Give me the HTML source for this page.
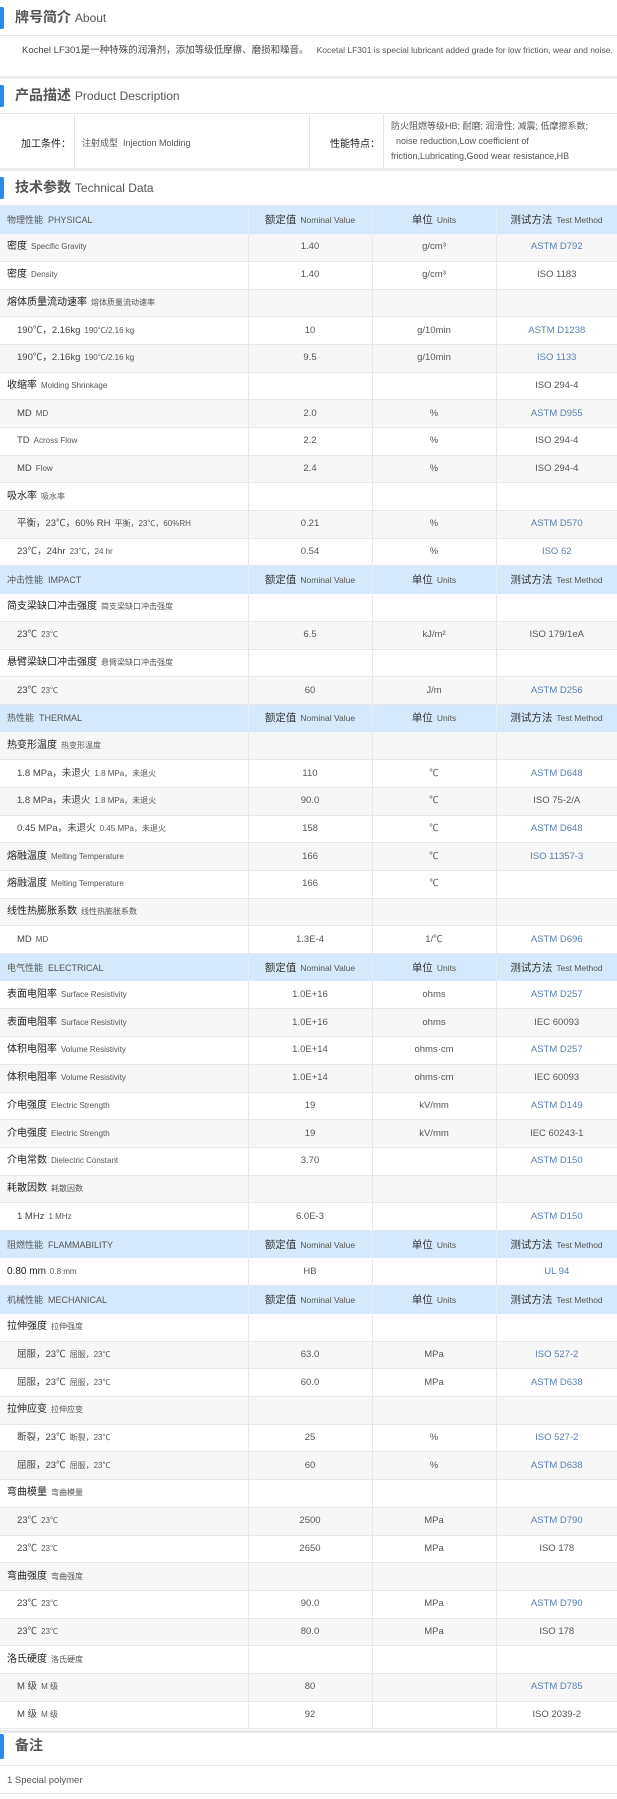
<!DOCTYPE html>
<html><head><meta charset="utf-8">
<style>
*{margin:0;padding:0;box-sizing:border-box}
body{width:617px;height:1799px;background:#fff;font-family:"Liberation Sans","Noto Sans CJK SC",sans-serif;color:#333;overflow:hidden;position:relative}
.abs{position:absolute;left:0;width:617px}
.hd{height:36px;border-bottom:1px solid #e6e6e6}
.hd .bar{position:absolute;left:0;top:7px;width:4px;height:22px;background:#2b8ae6;border-radius:0 2px 2px 0}
.hd .t{position:absolute;left:15px;top:9px;font-size:14px;line-height:17px;color:#555;font-weight:bold;white-space:nowrap}
.hd .t span{font-weight:normal;font-size:12px;color:#555}
.band{height:3px;background:#e9ebef}
.about{font-size:9.5px;line-height:12px;color:#444;padding-left:22px;white-space:nowrap}
.about span{font-size:8.5px;color:#555;margin-left:8px}
.pd div{position:absolute;top:0;height:54px;border-right:1px solid #e6e6e6;font-size:9px;color:#555}
table{border-collapse:collapse;width:617px;table-layout:fixed}
tr{height:27.7px}
td{border-right:1px solid #e8e8e8;border-bottom:1px solid #e8e8e8;font-size:9.5px;line-height:12px;color:#555;text-align:center;white-space:nowrap;padding:0;overflow:hidden}
td:last-child{border-right:0}
td:first-child{text-align:left;padding-left:7px}
tr.g td{background:#f7f7f7}
tr.h td{background:#d6e9fc;border-bottom:0;border-right:1px solid #e6eef8;color:#333;font-size:10.5px}
tr.h td small{font-size:8.5px;color:#555;margin-left:4px}
tr.h td:first-child{font-size:9px;color:#555}
td.s{padding-left:17px!important}
td b{font-weight:normal;color:#222;font-size:10px}
td i{font-style:normal;font-size:8px;color:#555;margin-left:4px}
td.s b{font-size:9.5px;color:#444}
.bl{color:#5a7fae}
</style></head><body>
<div class="abs" style="top:0"><div class="hd"><div class="bar"></div><div class="t">牌号简介 <span>About</span></div></div></div>
<div class="abs about" style="top:44px">Kochel LF301是一种特殊的润滑剂，添加等级低摩擦、磨损和噪音。<span>Kocetal LF301 is special lubricant added grade for low friction, wear and noise.</span></div>
<div class="abs band" style="top:76px"></div>
<div class="abs" style="top:78px"><div class="hd"><div class="bar"></div><div class="t">产品描述 <span>Product Description</span></div></div></div>
<div class="abs pd" style="top:114px;height:54px">
<div style="left:0;width:75px;padding:21px 0 0 21px;color:#222;font-size:10px">加工条件：</div>
<div style="left:75px;width:235px;padding:22px 0 0 7px">注射成型 &nbsp;Injection Molding</div>
<div style="left:310px;width:74px;padding:21px 0 0 20px;color:#222;font-size:10px">性能特点：</div>
<div style="left:384px;width:233px;border-right:0;padding:5px 0 0 7px;line-height:15px;color:#555">防火阻燃等级HB; 耐磨; 润滑性; 减震; 低摩擦系数;<br>&nbsp; noise reduction,Low coefficient of<br>friction,Lubricating,Good wear resistance,HB</div>
</div>
<div class="abs band" style="top:168px"></div>
<div class="abs" style="top:170px"><div class="hd"><div class="bar"></div><div class="t">技术参数 <span>Technical Data</span></div></div></div>
<div class="abs" style="top:206px">
<table>
<colgroup><col style="width:248px"><col style="width:124px"><col style="width:124px"><col style="width:121px"></colgroup>
<tr class="h"><td>物理性能 &nbsp;PHYSICAL</td><td>额定值<small>Nominal Value</small></td><td>单位<small>Units</small></td><td>测试方法<small>Test Method</small></td></tr>
<tr class="g"><td><b>密度</b><i>Specific Gravity</i></td><td>1.40</td><td>g/cm³</td><td class="bl">ASTM D792</td></tr>
<tr><td><b>密度</b><i>Density</i></td><td>1.40</td><td>g/cm³</td><td>ISO 1183</td></tr>
<tr class="g"><td><b>熔体质量流动速率</b><i>熔体质量流动速率</i></td><td></td><td></td><td></td></tr>
<tr><td class="s"><b>190℃，2.16kg</b><i>190℃/2.16 kg</i></td><td>10</td><td>g/10min</td><td class="bl">ASTM D1238</td></tr>
<tr class="g"><td class="s"><b>190℃，2.16kg</b><i>190℃/2.16 kg</i></td><td>9.5</td><td>g/10min</td><td class="bl">ISO 1133</td></tr>
<tr><td><b>收缩率</b><i>Molding Shrinkage</i></td><td></td><td></td><td>ISO 294-4</td></tr>
<tr class="g"><td class="s"><b>MD</b><i>MD</i></td><td>2.0</td><td>%</td><td class="bl">ASTM D955</td></tr>
<tr><td class="s"><b>TD</b><i>Across Flow</i></td><td>2.2</td><td>%</td><td>ISO 294-4</td></tr>
<tr class="g"><td class="s"><b>MD</b><i>Flow</i></td><td>2.4</td><td>%</td><td>ISO 294-4</td></tr>
<tr><td><b>吸水率</b><i>吸水率</i></td><td></td><td></td><td></td></tr>
<tr class="g"><td class="s"><b>平衡，23℃，60% RH</b><i>平衡，23℃，60%RH</i></td><td>0.21</td><td>%</td><td class="bl">ASTM D570</td></tr>
<tr><td class="s"><b>23℃，24hr</b><i>23℃，24 hr</i></td><td>0.54</td><td>%</td><td class="bl">ISO 62</td></tr>
<tr class="h"><td>冲击性能 &nbsp;IMPACT</td><td>额定值<small>Nominal Value</small></td><td>单位<small>Units</small></td><td>测试方法<small>Test Method</small></td></tr>
<tr><td><b>简支梁缺口冲击强度</b><i>简支梁缺口冲击强度</i></td><td></td><td></td><td></td></tr>
<tr class="g"><td class="s"><b>23℃</b><i>23℃</i></td><td>6.5</td><td>kJ/m²</td><td>ISO 179/1eA</td></tr>
<tr><td><b>悬臂梁缺口冲击强度</b><i>悬臂梁缺口冲击强度</i></td><td></td><td></td><td></td></tr>
<tr class="g"><td class="s"><b>23℃</b><i>23℃</i></td><td>60</td><td>J/m</td><td class="bl">ASTM D256</td></tr>
<tr class="h"><td>热性能 &nbsp;THERMAL</td><td>额定值<small>Nominal Value</small></td><td>单位<small>Units</small></td><td>测试方法<small>Test Method</small></td></tr>
<tr class="g"><td><b>热变形温度</b><i>热变形温度</i></td><td></td><td></td><td></td></tr>
<tr><td class="s"><b>1.8 MPa，未退火</b><i>1.8 MPa，未退火</i></td><td>110</td><td>℃</td><td class="bl">ASTM D648</td></tr>
<tr class="g"><td class="s"><b>1.8 MPa，未退火</b><i>1.8 MPa，未退火</i></td><td>90.0</td><td>℃</td><td>ISO 75-2/A</td></tr>
<tr><td class="s"><b>0.45 MPa，未退火</b><i>0.45 MPa，未退火</i></td><td>158</td><td>℃</td><td class="bl">ASTM D648</td></tr>
<tr class="g"><td><b>熔融温度</b><i>Melting Temperature</i></td><td>166</td><td>℃</td><td class="bl">ISO 11357-3</td></tr>
<tr><td><b>熔融温度</b><i>Melting Temperature</i></td><td>166</td><td>℃</td><td></td></tr>
<tr class="g"><td><b>线性热膨胀系数</b><i>线性热膨胀系数</i></td><td></td><td></td><td></td></tr>
<tr><td class="s"><b>MD</b><i>MD</i></td><td>1.3E-4</td><td>1/℃</td><td class="bl">ASTM D696</td></tr>
<tr class="h"><td>电气性能 &nbsp;ELECTRICAL</td><td>额定值<small>Nominal Value</small></td><td>单位<small>Units</small></td><td>测试方法<small>Test Method</small></td></tr>
<tr><td><b>表面电阻率</b><i>Surface Resistivity</i></td><td>1.0E+16</td><td>ohms</td><td class="bl">ASTM D257</td></tr>
<tr class="g"><td><b>表面电阻率</b><i>Surface Resistivity</i></td><td>1.0E+16</td><td>ohms</td><td>IEC 60093</td></tr>
<tr><td><b>体积电阻率</b><i>Volume Resistivity</i></td><td>1.0E+14</td><td>ohms·cm</td><td class="bl">ASTM D257</td></tr>
<tr class="g"><td><b>体积电阻率</b><i>Volume Resistivity</i></td><td>1.0E+14</td><td>ohms·cm</td><td>IEC 60093</td></tr>
<tr><td><b>介电强度</b><i>Electric Strength</i></td><td>19</td><td>kV/mm</td><td class="bl">ASTM D149</td></tr>
<tr class="g"><td><b>介电强度</b><i>Electric Strength</i></td><td>19</td><td>kV/mm</td><td>IEC 60243-1</td></tr>
<tr><td><b>介电常数</b><i>Dielectric Constant</i></td><td>3.70</td><td></td><td class="bl">ASTM D150</td></tr>
<tr class="g"><td><b>耗散因数</b><i>耗散因数</i></td><td></td><td></td><td></td></tr>
<tr><td class="s"><b>1 MHz</b><i>1 MHz</i></td><td>6.0E-3</td><td></td><td class="bl">ASTM D150</td></tr>
<tr class="h"><td>阻燃性能 &nbsp;FLAMMABILITY</td><td>额定值<small>Nominal Value</small></td><td>单位<small>Units</small></td><td>测试方法<small>Test Method</small></td></tr>
<tr><td><b>0.80 mm</b><i>0.8 mm</i></td><td>HB</td><td></td><td class="bl">UL 94</td></tr>
<tr class="h"><td>机械性能 &nbsp;MECHANICAL</td><td>额定值<small>Nominal Value</small></td><td>单位<small>Units</small></td><td>测试方法<small>Test Method</small></td></tr>
<tr><td><b>拉伸强度</b><i>拉伸强度</i></td><td></td><td></td><td></td></tr>
<tr class="g"><td class="s"><b>屈服，23℃</b><i>屈服，23℃</i></td><td>63.0</td><td>MPa</td><td class="bl">ISO 527-2</td></tr>
<tr><td class="s"><b>屈服，23℃</b><i>屈服，23℃</i></td><td>60.0</td><td>MPa</td><td class="bl">ASTM D638</td></tr>
<tr class="g"><td><b>拉伸应变</b><i>拉伸应变</i></td><td></td><td></td><td></td></tr>
<tr><td class="s"><b>断裂，23℃</b><i>断裂，23℃</i></td><td>25</td><td>%</td><td class="bl">ISO 527-2</td></tr>
<tr class="g"><td class="s"><b>屈服，23℃</b><i>屈服，23℃</i></td><td>60</td><td>%</td><td class="bl">ASTM D638</td></tr>
<tr><td><b>弯曲模量</b><i>弯曲模量</i></td><td></td><td></td><td></td></tr>
<tr class="g"><td class="s"><b>23℃</b><i>23℃</i></td><td>2500</td><td>MPa</td><td class="bl">ASTM D790</td></tr>
<tr><td class="s"><b>23℃</b><i>23℃</i></td><td>2650</td><td>MPa</td><td>ISO 178</td></tr>
<tr class="g"><td><b>弯曲强度</b><i>弯曲强度</i></td><td></td><td></td><td></td></tr>
<tr><td class="s"><b>23℃</b><i>23℃</i></td><td>90.0</td><td>MPa</td><td class="bl">ASTM D790</td></tr>
<tr class="g"><td class="s"><b>23℃</b><i>23℃</i></td><td>80.0</td><td>MPa</td><td>ISO 178</td></tr>
<tr><td><b>洛氏硬度</b><i>洛氏硬度</i></td><td></td><td></td><td></td></tr>
<tr class="g"><td class="s"><b>M 级</b><i>M 级</i></td><td>80</td><td></td><td class="bl">ASTM D785</td></tr>
<tr><td class="s"><b>M 级</b><i>M 级</i></td><td>92</td><td></td><td>ISO 2039-2</td></tr>
</table>
</div>
<div class="abs" style="top:1730px">
<div class="band"></div>
<div class="hd" style="height:33px;position:relative"><div class="bar" style="top:1px;height:25px"></div><div class="t" style="top:4px">备注</div></div>
<div style="height:28px;border-bottom:1px solid #e6e6e6;font-size:9.5px;color:#555;padding:9px 0 0 7px">1 Special polymer</div>
</div>
</body></html>
